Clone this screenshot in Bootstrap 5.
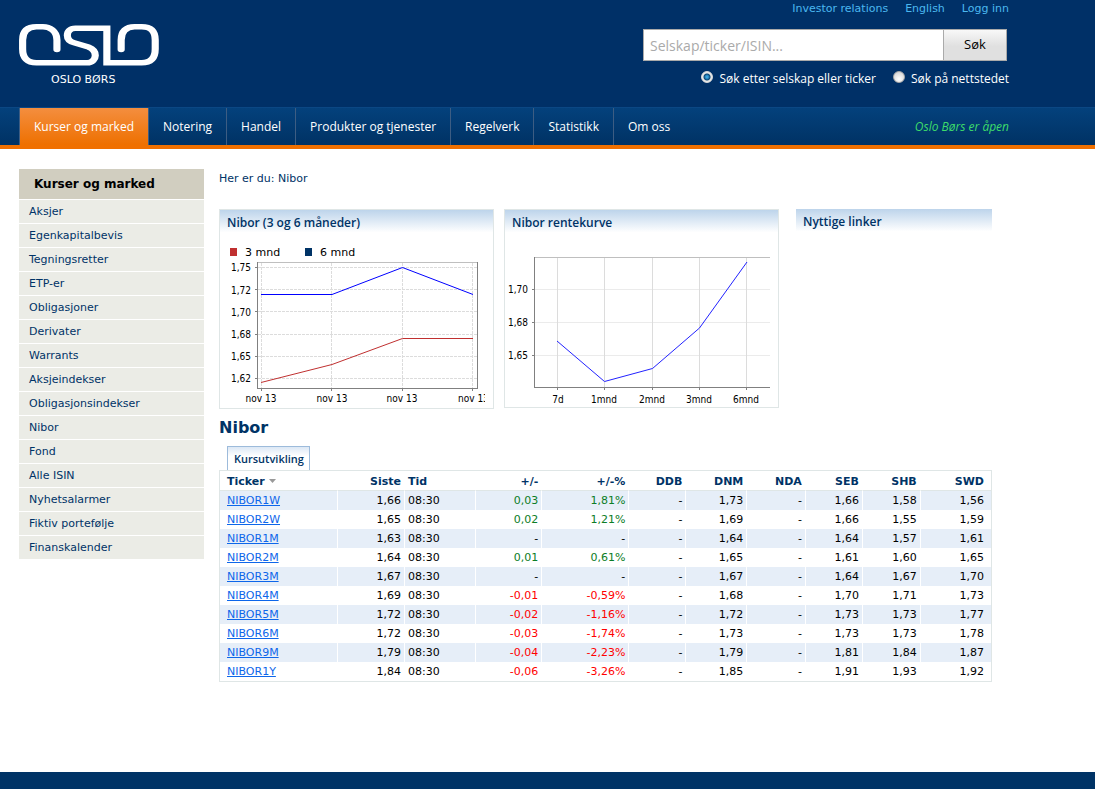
<!DOCTYPE html>
<html lang="no">
<head>
<meta charset="utf-8">
<meta name="viewport" content="width=device-width, initial-scale=1">
<title>Nibor - Oslo Børs</title>
<link href="https://cdn.jsdelivr.net/npm/bootstrap@5.3.0/dist/css/bootstrap.min.css" rel="stylesheet">
<style>
:root{--navy:#003366;--ui:"Open Sans","Noto Sans",sans-serif}
body{font:11px/16px "DejaVu Sans",sans-serif;color:var(--navy)}
.site-width{max-width:1009px;padding-left:19px}
.site-head{background:#003067;font-family:var(--ui);color:#fff}
.site-head .site-width{height:107px}
.site-logo{margin-top:22px}
.toplinks{gap:17px;font:11px/18px "DejaVu Sans",sans-serif}
.toplinks a{color:#4bb8f0}
.search-row{width:364px;margin:11px 2px 0 0}
.search-row .form-control{height:32px;padding:0 6px;border:1px solid #aaa;border-right:0;border-radius:0;font-size:14px;color:#333}
.search-row .form-control::placeholder{color:#aaa;opacity:1}
.search-row .btn{width:64px;height:32px;padding:0;border:1px solid #aaa;border-radius:0;font-size:13px;color:#000;background:linear-gradient(#f8f8f8,#e0e0e0 55%)}
.scope{gap:17px;margin-top:10px;font-size:12px;font-weight:500}
.scope label{gap:6px}
.scope input{appearance:none;width:12px;height:12px;margin:0 0 4px;border-radius:50%;border:1px solid #aaa;background:radial-gradient(circle at 50% 70%,#fff,#ccc)}
.scope input:checked{border-color:#ddd;background:radial-gradient(circle,#39a3dd 0 1px,#0a4777 3px,#e8e8e8 4px)}
.main-nav{height:42px;border-top:1px solid #0b4784;border-bottom:4px solid #f07000;background:linear-gradient(#04417c,#003264);font-family:var(--ui);font-size:12px;font-weight:500}
.main-nav .nav-link{padding:0 14px;line-height:37px;color:#fff;border-left:1px solid #3d5d83}
.main-nav .nav-link.active{background:linear-gradient(#f48e3f,#ee7000)}
.open-state{color:#3ddc6a;font-style:italic}
.page{padding-top:20px}
.side{width:185px}
.side-title{height:30px;padding-left:15px;margin:0;background:#d1cec0;color:#000;font-size:12px;font-weight:700;line-height:30px}
.side .nav-link{margin-top:1px;padding:0 10px;line-height:23px;font-size:11px;background:#ebece6;color:var(--navy)}
.content{margin:0 17px 0 15px;min-width:0}
.crumb{margin:2px 0 22px}
.panels{display:grid;grid-template-columns:275fr 275fr 203fr;gap:10px;align-items:start}
.panel{border:1px solid #dfe6e6}
.panel.links{margin-left:7px;border:0}
.panel h2{height:28px;margin:0;padding-left:7px;font:600 12px/26px var(--ui);background:linear-gradient(#bdd4eb,#fff 80%)}
.panel svg{display:block;width:100%;font-family:"DejaVu Sans Condensed","DejaVu Sans",sans-serif;font-size:10px}
.axis{stroke:#808080;shape-rendering:crispEdges;fill:none}
.gridline{stroke:#dcdcdc;shape-rendering:crispEdges;fill:none}
.gridline.faint{stroke:#ebebeb}
.legend-text{font-family:"DejaVu Sans",sans-serif;font-size:11px}
h1{margin:9px 0 8px;font-size:16px;line-height:20px;font-weight:700}
.tabs{padding-left:8px}
.tabs .nav-link{height:24px;padding:0 5px 0 6px;border:1px solid #9dbbdb;border-bottom:0;font:600 11px/23px var(--ui);color:var(--navy);background:linear-gradient(#dce8f5,#fff 40%)}
.quotes{table-layout:fixed;width:100%;border:1px solid #dfe6e6;border-collapse:separate;border-spacing:0}
.quotes th,.quotes td{height:19px;padding:1px 3px 0 0;line-height:18px;text-align:right;border-right:1px solid #fff;white-space:nowrap}
.quotes th{height:20px;padding-top:2px;border-bottom:1px solid #dfe6e6;font-weight:700;line-height:17px}
.quotes td{color:#000}
.quotes th:first-child,.quotes td:first-child{padding-left:7px;text-align:left}
.quotes th:nth-child(3),.quotes td:nth-child(3){padding-left:3px;text-align:left}
.quotes th:last-child,.quotes td:last-child{padding-right:7px;border-right:0}
.quotes tbody tr:nth-child(odd){background:#e6eef8}
.quotes a{color:#0d66ea}
.quotes .up{color:#0c7d26}
.quotes .down{color:#f00}
.sort-mark{vertical-align:2px}
.site-foot{height:17px;background:var(--navy)}
</style>
</head>
<body class="d-flex flex-column min-vh-100 bg-white">
<header class="site-head">
  <div class="site-width d-flex justify-content-between">
    <a class="site-logo" href="#" aria-label="Oslo Børs">
      <svg width="142" height="64" viewBox="19 22 142 64">
        <g transform="scale(1.3 1)" fill="none" stroke="#fff" stroke-width="5.5">
          <path stroke-linecap="round" d="M43.8 49.5V40C43.8 31 38 26.7 33 26.7H28C21 26.7 17.4 31 17.4 40V49C17.4 58 21 62.8 28 62.8H67C71 62.8 73.3 59 73.3 55.5C73.3 51 71 48.5 68 47L57 42.8C53.5 41.5 51.8 39 51.8 35.5C51.8 31 54 28.2 58 28.2H82.2V62.8H109C116 62.8 119.4 58 119.4 49V40C119.4 31 116 26.7 109 26.7H103.5C97 26.7 93.2 31 93.2 40V49.5"/>
        </g>
        <text x="51" y="83" font-family="DejaVu Sans, sans-serif" font-size="11" fill="#fff">OSLO BØRS</text>
      </svg>
    </a>
    <div class="d-flex flex-column align-items-end">
      <nav class="toplinks d-flex"><a class="text-decoration-none" href="#">Investor relations</a><a class="text-decoration-none" href="#">English</a><a class="text-decoration-none" href="#">Logg inn</a></nav>
      <form class="search-row d-flex" id="search"><input class="form-control" type="text" placeholder="Selskap/ticker/ISIN..." aria-label="Søk"><button class="btn flex-shrink-0" type="button">Søk</button></form>
      <div class="scope d-flex">
        <label class="d-flex align-items-center"><input type="radio" name="scope" form="search" checked>Søk etter selskap eller ticker</label>
        <label class="d-flex align-items-center"><input type="radio" name="scope" form="search">Søk på nettstedet</label>
      </div>
    </div>
  </div>
</header>
<nav class="main-nav">
  <div class="site-width d-flex justify-content-between align-items-center">
    <div class="nav flex-nowrap">
      <a class="nav-link active" href="#">Kurser og marked</a><a class="nav-link" href="#">Notering</a><a class="nav-link" href="#">Handel</a><a class="nav-link" href="#">Produkter og tjenester</a><a class="nav-link" href="#">Regelverk</a><a class="nav-link" href="#">Statistikk</a><a class="nav-link" href="#">Om oss</a>
    </div>
    <span class="open-state">Oslo Børs er åpen</span>
  </div>
</nav>
<div class="site-width page d-flex w-100 align-items-start">
  <aside class="side flex-shrink-0">
    <h2 class="side-title">Kurser og marked</h2>
    <nav class="nav flex-column">
      <a class="nav-link" href="#">Aksjer</a><a class="nav-link" href="#">Egenkapitalbevis</a><a class="nav-link" href="#">Tegningsretter</a><a class="nav-link" href="#">ETP-er</a><a class="nav-link" href="#">Obligasjoner</a><a class="nav-link" href="#">Derivater</a><a class="nav-link" href="#">Warrants</a><a class="nav-link" href="#">Aksjeindekser</a><a class="nav-link" href="#">Obligasjonsindekser</a><a class="nav-link" href="#">Nibor</a><a class="nav-link" href="#">Fond</a><a class="nav-link" href="#">Alle ISIN</a><a class="nav-link" href="#">Nyhetsalarmer</a><a class="nav-link" href="#">Fiktiv portefølje</a><a class="nav-link" href="#">Finanskalender</a>
    </nav>
  </aside>
  <main class="content flex-grow-1">
    <p class="crumb">Her er du: Nibor</p>
    <div class="panels">
      <section class="panel">
        <h2>Nibor (3 og 6 måneder)</h2>
        <svg viewBox="0 0 273 170">
          <path fill="#c03030" d="M10 10h7v8h-7z"/><path fill="#003366" d="M85 10h7v8h-7z"/>
          <text class="legend-text" x="25" y="18">3 mnd</text><text class="legend-text" x="100" y="18">6 mnd</text>
          <path class="gridline" stroke-dasharray="3 1" d="M38 29.5H257M38 51.5H257M38 73.5H257M38 96.5H257M38 118.5H257M38 140.5H257M41.5 25V150M111.5 25V150M182.5 25V150M252.5 25V150"/>
          <path class="axis" stroke-opacity=".5" d="M37 24.5H258"/>
          <path class="axis" d="M37.5 24V150.5H257.5V24M35 29.5h3M35 51.5h3M35 73.5h3M35 96.5h3M35 118.5h3M35 140.5h3M41.5 150v3M111.5 150v3M182.5 150v3M252.5 150v3"/>
          <path fill="none" stroke="#00f" d="M41 56.5H112L182.5 29.5L253 56.5"/>
          <path fill="none" stroke="#c03030" d="M41 144.5L112 126.5L182.5 100.5H253"/>
          <g text-anchor="end"><text x="31" y="33">1,75</text><text x="31" y="56">1,72</text><text x="31" y="78">1,70</text><text x="31" y="100">1,68</text><text x="31" y="122">1,65</text><text x="31" y="144">1,62</text></g>
          <g text-anchor="middle"><text x="41" y="164">nov 13</text><text x="112" y="164">nov 13</text><text x="182" y="164">nov 13</text></g>
          <svg x="237" y="153" width="28" height="15" style="width:28px"><text x="1" y="11">nov 13</text></svg>
        </svg>
      </section>
      <section class="panel">
        <h2>Nibor rentekurve</h2>
        <svg viewBox="0 0 273 169">
          <path class="gridline faint" d="M30 51.5H265M30 84.5H265M30 117.5H265"/>
          <path class="gridline" d="M52.5 20V149M99.5 20V149M147.5 20V149M194.5 20V149M241.5 20V149"/>
          <path class="axis" stroke-opacity=".5" d="M29 19.5H265"/>
          <path class="axis" d="M29.5 19V149.5H265M27 51.5h3M27 84.5h3M27 117.5h3M52.5 149v3M99.5 149v3M147.5 149v3M194.5 149v3M241.5 149v3"/>
          <path fill="none" stroke="#22f" d="M52 103L99.5 143.5L147.5 130.5L194.5 90L242 24"/>
          <g text-anchor="end"><text x="23" y="55">1,70</text><text x="23" y="88">1,68</text><text x="23" y="121">1,65</text></g>
          <g text-anchor="middle"><text x="53" y="165">7d</text><text x="99" y="165">1mnd</text><text x="147" y="165">2mnd</text><text x="194" y="165">3mnd</text><text x="241" y="165">6mnd</text></g>
        </svg>
      </section>
      <section class="panel links"><h2>Nyttige linker</h2></section>
    </div>
    <h1>Nibor</h1>
    <div class="tabs nav"><a class="nav-link" href="#">Kursutvikling</a></div>
    <table class="quotes">
      <colgroup><col style="width:15.3%"><col style="width:8.7%"><col style="width:9.2%"><col style="width:8.6%"><col style="width:11.3%"><col style="width:7.4%"><col style="width:7.9%"><col style="width:7.6%"><col style="width:7.4%"><col style="width:7.5%"><col></colgroup>
      <thead><tr><th>Ticker <svg class="sort-mark" width="7" height="4" viewBox="0 0 7 4"><path fill="#999" d="M0 0h7L3.5 4z"/></svg></th><th>Siste</th><th>Tid</th><th>+/-</th><th>+/-%</th><th>DDB</th><th>DNM</th><th>NDA</th><th>SEB</th><th>SHB</th><th>SWD</th></tr></thead>
      <tbody>
        <tr><td><a href="#">NIBOR1W</a></td><td>1,66</td><td>08:30</td><td class="up">0,03</td><td class="up">1,81%</td><td>-</td><td>1,73</td><td>-</td><td>1,66</td><td>1,58</td><td>1,56</td></tr>
        <tr><td><a href="#">NIBOR2W</a></td><td>1,65</td><td>08:30</td><td class="up">0,02</td><td class="up">1,21%</td><td>-</td><td>1,69</td><td>-</td><td>1,66</td><td>1,55</td><td>1,59</td></tr>
        <tr><td><a href="#">NIBOR1M</a></td><td>1,63</td><td>08:30</td><td>-</td><td>-</td><td>-</td><td>1,64</td><td>-</td><td>1,64</td><td>1,57</td><td>1,61</td></tr>
        <tr><td><a href="#">NIBOR2M</a></td><td>1,64</td><td>08:30</td><td class="up">0,01</td><td class="up">0,61%</td><td>-</td><td>1,65</td><td>-</td><td>1,61</td><td>1,60</td><td>1,65</td></tr>
        <tr><td><a href="#">NIBOR3M</a></td><td>1,67</td><td>08:30</td><td>-</td><td>-</td><td>-</td><td>1,67</td><td>-</td><td>1,64</td><td>1,67</td><td>1,70</td></tr>
        <tr><td><a href="#">NIBOR4M</a></td><td>1,69</td><td>08:30</td><td class="down">-0,01</td><td class="down">-0,59%</td><td>-</td><td>1,68</td><td>-</td><td>1,70</td><td>1,71</td><td>1,73</td></tr>
        <tr><td><a href="#">NIBOR5M</a></td><td>1,72</td><td>08:30</td><td class="down">-0,02</td><td class="down">-1,16%</td><td>-</td><td>1,72</td><td>-</td><td>1,73</td><td>1,73</td><td>1,77</td></tr>
        <tr><td><a href="#">NIBOR6M</a></td><td>1,72</td><td>08:30</td><td class="down">-0,03</td><td class="down">-1,74%</td><td>-</td><td>1,73</td><td>-</td><td>1,73</td><td>1,73</td><td>1,78</td></tr>
        <tr><td><a href="#">NIBOR9M</a></td><td>1,79</td><td>08:30</td><td class="down">-0,04</td><td class="down">-2,23%</td><td>-</td><td>1,79</td><td>-</td><td>1,81</td><td>1,84</td><td>1,87</td></tr>
        <tr><td><a href="#">NIBOR1Y</a></td><td>1,84</td><td>08:30</td><td class="down">-0,06</td><td class="down">-3,26%</td><td>-</td><td>1,85</td><td>-</td><td>1,91</td><td>1,93</td><td>1,92</td></tr>
      </tbody>
    </table>
  </main>
</div>
<footer class="site-foot mt-auto"></footer>
<script src="https://cdn.jsdelivr.net/npm/bootstrap@5.3.0/dist/js/bootstrap.bundle.min.js"></script>
</body>
</html>
